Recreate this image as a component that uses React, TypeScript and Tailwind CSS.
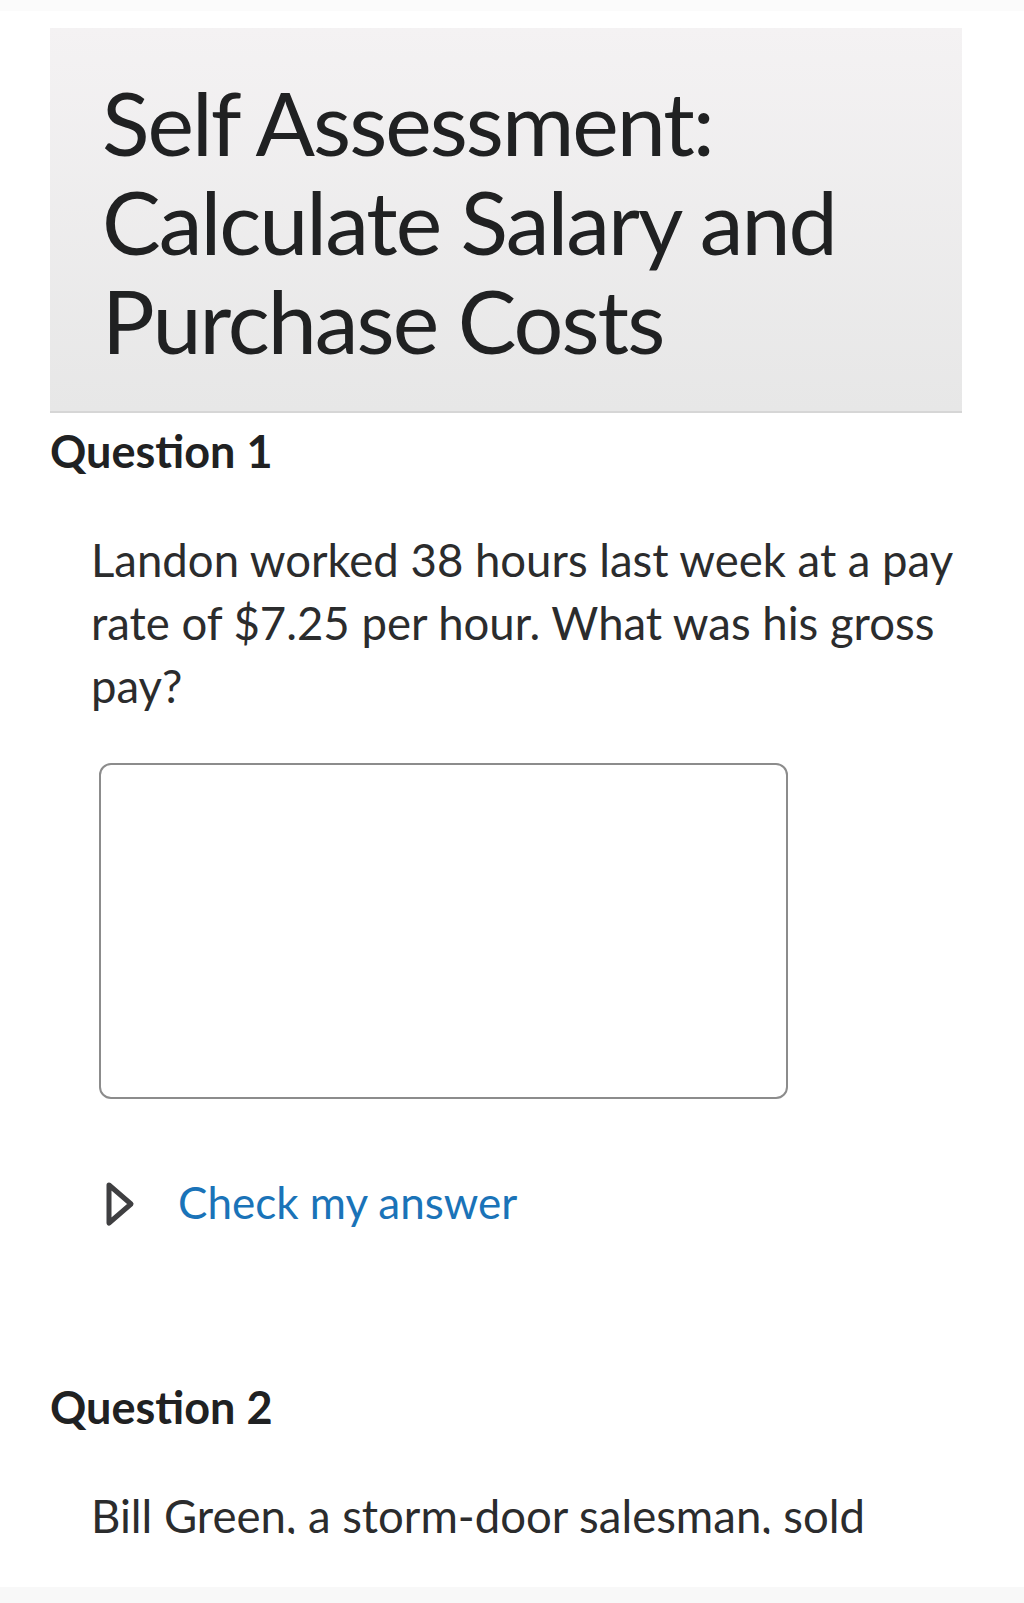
import React from "react";

function Question({ label, children }: { label: string; children: React.ReactNode }) {
  return (
    <section>
      <h2 className="text-[45px] font-bold leading-[56px] text-[#202122]">{label}</h2>
      {children}
    </section>
  );
}

export default function App() {
  return (
    <div className="min-h-[1603px] flex flex-col bg-white font-['Lato','Liberation_Sans',sans-serif] text-[#2a2b2c]">
      <div className="h-[11px] bg-[#fbfbfb]" />
      <div className="flex-1 pl-[50px] pr-[62px] pt-[17px]">
        {/* Title banner */}
        <div className="bg-gradient-to-b from-[#f4f2f3] to-[#e7e7e7] border-b-2 border-[#d6d6d6] pl-[52px] pr-4 pt-[45px] pb-[41px]">
          <h1 className="text-[88px] leading-[99px] tracking-[-2px] font-normal text-[#202122]">
            Self Assessment:
            <br />
            Calculate Salary and
            <br />
            Purchase Costs
          </h1>
        </div>

        <div className="pt-[10px]">
          <Question label="Question 1">
            <p className="mt-[49px] pl-[41px] text-[45.5px] leading-[63px] text-[#2b2c2d]">
              Landon worked 38 hours last week at a pay rate of $7.25 per hour. What was his gross pay?
            </p>
            <div className="ml-[49px] mt-[46px] w-[689px] h-[336px] rounded-[12px] border-2 border-[#8c8c8c] bg-white" />
            <button className="mt-[73px] ml-[55px] flex items-center gap-[43px] text-[44px] leading-[60px] text-[#1a73b8]">
              <svg width="30" height="46" viewBox="0 0 30 46" className="shrink-0 mt-[4px]">
                <path d="M4 4 L26 23 L4 42 Z" fill="none" stroke="#3f3f41" strokeWidth="5" strokeLinejoin="round" />
              </svg>
              <span>Check my answer</span>
            </button>
          </Question>

          <div className="mt-[147px]">
            <Question label="Question 2">
              <div className="mt-[49px] h-[50px] overflow-hidden">
                <p className="pl-[41px] text-[45.5px] leading-[63px] text-[#2b2c2d]">
                  Bill Green, a storm-door salesman, sold
                </p>
              </div>
            </Question>
          </div>
        </div>
      </div>
      <div className="h-[16px] bg-[#f8f8f8]" />
    </div>
  );
}
